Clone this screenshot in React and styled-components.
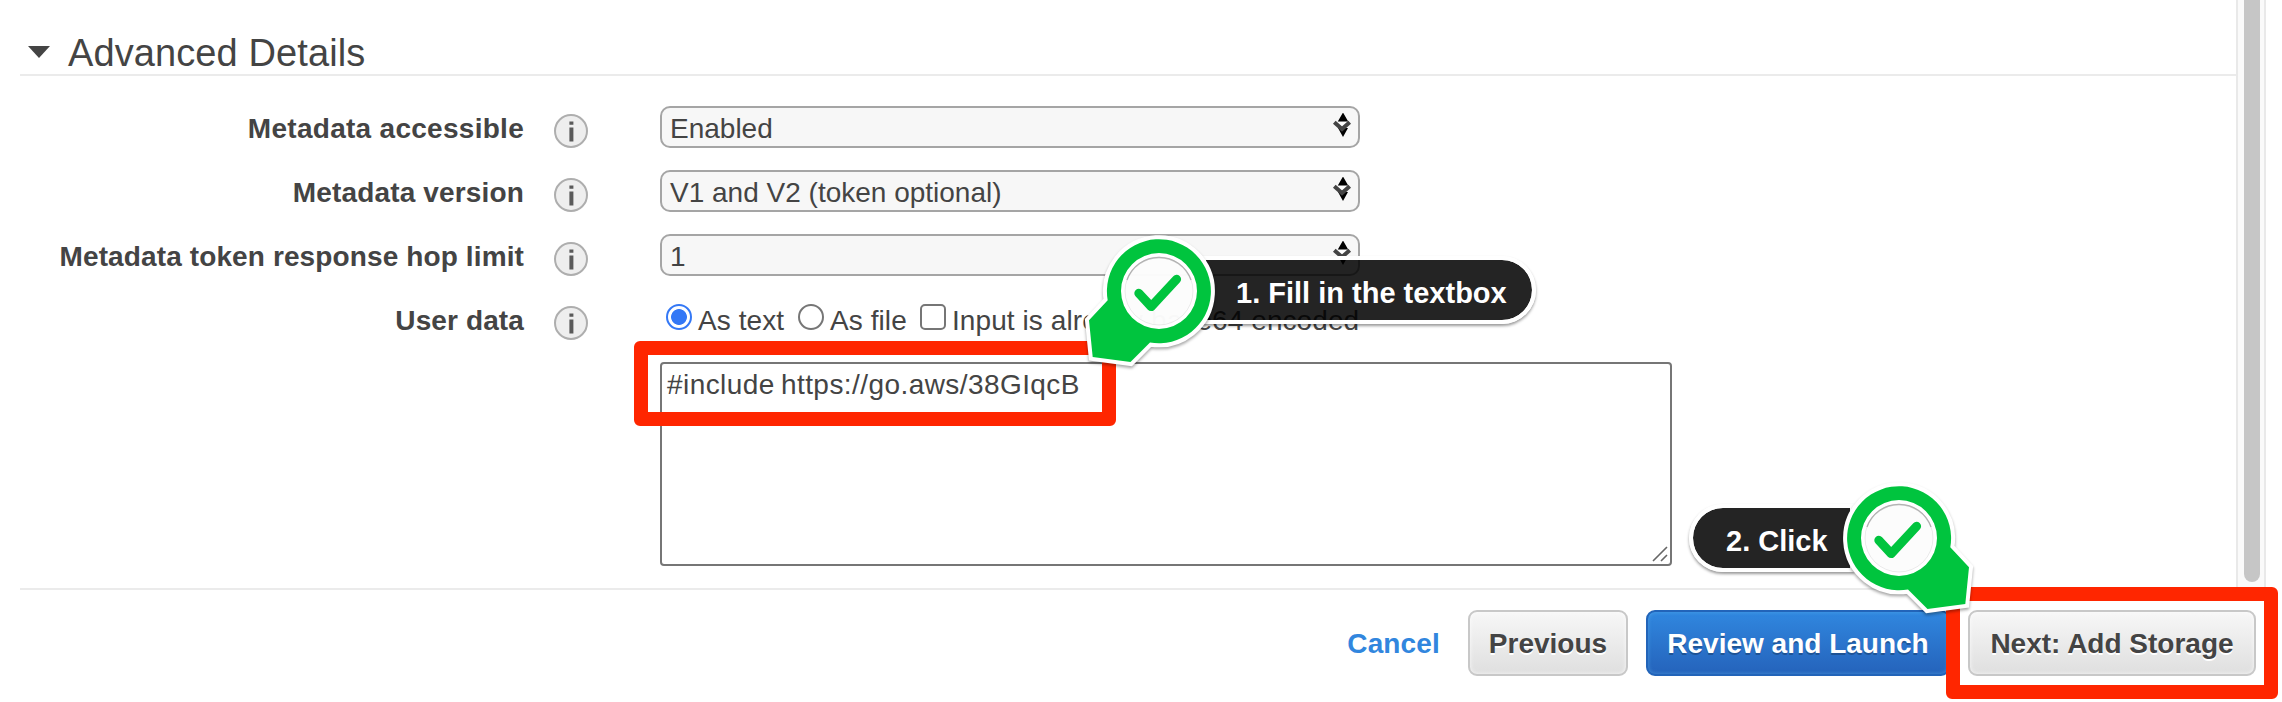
import React from 'react';
import styled, { createGlobalStyle } from 'styled-components';

const Global = createGlobalStyle`
  * { box-sizing: border-box; }
  body { margin: 0; background: #fff; }
`;

const Page = styled.div`
  position: relative;
  width: 2282px;
  height: 702px;
  overflow: hidden;
  background: #fff;
  color: #444;
  font: 28px/32px "Liberation Sans", Arial, sans-serif;
  display: flex;
  flex-direction: column;
`;

const Body = styled.div`
  display: flex;
  height: 588px;
`;

const Content = styled.main`
  width: 2236px;
  padding-left: 20px;
`;

const Heading = styled.h2`
  margin: 0;
  height: 76px;
  padding: 32px 0 0 8px;
  border-bottom: 2px solid #ebebeb;
  font-size: 38px;
  line-height: 42px;
  font-weight: 400;
  letter-spacing: 0.1px;
  display: flex;
  gap: 18px;
`;

const Caret = styled.svg`
  width: 22px;
  height: 12px;
  margin-top: 14px;
`;

const Form = styled.div`
  padding-top: 30px;
  display: flex;
  flex-direction: column;
  gap: 22px;
`;

const Row = styled.div`
  display: flex;
  height: 42px;
`;

const Label = styled.div`
  width: 504px;
  padding-top: 7px;
  text-align: right;
  font-weight: 700;
  letter-spacing: ${(p) => p.$ls || 0.12}px;
  white-space: nowrap;
`;

const Info = styled.svg`
  width: 36px;
  height: 36px;
  margin: 7px 71px 0 29px;
`;

const SelectBox = styled.div`
  width: 700px;
  height: 42px;
  border: 2px solid #a5a5a5;
  border-radius: 10px;
  background: #f7f7f7;
  padding: 5px 6px 0 8px;
  display: flex;
  justify-content: space-between;
`;

const Arrows = styled.svg`
  width: 20px;
  height: 26px;
`;

const Options = styled.div`
  display: flex;
  padding: 6px 0 0 6px;
  white-space: nowrap;
  letter-spacing: 0.08px;
`;

const OptionText = styled.span`
  width: ${(p) => p.$w}px;
  margin-left: 6px;
  padding-top: 1px;
`;

const Radio = styled.span`
  width: 26px;
  height: 26px;
  border: 2px solid ${(p) => (p.$on ? '#3478f6' : '#767676')};
  border-radius: 50%;
  background: ${(p) => (p.$on ? 'radial-gradient(circle, #3478f6 7.5px, #fff 8.3px)' : '#fff')};
`;

const Check = styled.span`
  width: 26px;
  height: 26px;
  border: 2px solid #767676;
  border-radius: 5px;
`;

const TextArea = styled.div`
  width: 1012px;
  height: 204px;
  margin-left: 640px;
  border: 2px solid #767676;
  border-radius: 4px;
  padding: 5px;
  letter-spacing: 0.43px;
  word-spacing: -2px;
  display: flex;
  justify-content: space-between;
`;

const Grip = styled.svg`
  width: 16px;
  height: 18px;
  align-self: flex-end;
  margin: 0 -3px -4px 0;
`;

const ScrollTrack = styled.div`
  width: 30px;
  height: 588px;
  border: solid #e9e9e9;
  border-width: 0 2px;
  background: #fafafa;
  padding-left: 6px;
`;

const ScrollThumb = styled.div`
  width: 16px;
  height: 582px;
  border-radius: 0 0 8px 8px;
  background: #c6c6c6;
`;

const Footer = styled.footer`
  margin-left: 20px;
  width: 2236px;
  border-top: 2px solid #ebebeb;
  padding-top: 20px;
  display: flex;
  justify-content: flex-end;
  gap: 18px;
`;

const Cancel = styled.a`
  color: #3186de;
  font-weight: 700;
  line-height: 68px;
  margin-right: 10px;
  letter-spacing: 0.15px;
`;

const Button = styled.button`
  width: ${(p) => p.$w}px;
  height: 66px;
  padding: 2px 0 0;
  border: 2px solid ${(p) => (p.$primary ? '#2264b9' : '#c8c8c8')};
  border-radius: 9px;
  background: ${(p) => (p.$primary ? 'linear-gradient(#3087df, #2563bb)' : 'linear-gradient(#f7f7f7, #dfdfdf)')};
  box-shadow: inset 0 0 4px ${(p) => (p.$primary ? 'rgba(90,175,235,.6)' : 'rgba(255,255,255,.8)')};
  color: ${(p) => (p.$primary ? '#fff' : '#444')};
  text-shadow: 0 2px 0 ${(p) => (p.$primary ? 'rgba(0,0,0,.25)' : '#fff')};
  font: 700 28px/32px "Liberation Sans", Arial, sans-serif;
  white-space: nowrap;
`;

const RedBox = styled.div`
  position: absolute;
  left: ${(p) => p.$x}px;
  top: ${(p) => p.$y}px;
  width: ${(p) => p.$w}px;
  height: ${(p) => p.$h}px;
  border: 14px solid #ff2600;
  border-radius: 6px;
`;

const Callout = styled.div`
  position: absolute;
  left: ${(p) => p.$x}px;
  top: ${(p) => p.$y}px;
  width: ${(p) => p.$w}px;
  height: 68px;
  border: 4px solid #fff;
  border-radius: ${(p) => (p.$flip ? '34px 0 0 34px' : '0 34px 34px 0')};
  background: rgba(0, 0, 0, 0.86);
  background-clip: padding-box;
  box-shadow: 0 2px 3px rgba(0, 0, 0, 0.4);
  color: #fff;
  font: 700 29px/34px "Liberation Sans", Arial, sans-serif;
  white-space: nowrap;
  padding: 16px 0 0 ${(p) => p.$pad}px;
`;

const PinSvg = styled.svg`
  position: absolute;
  left: ${(p) => p.$x - 90}px;
  top: ${(p) => p.$y - 90}px;
  width: 180px;
  height: 180px;
  filter: drop-shadow(0 2px 1.5px rgba(0, 0, 0, 0.35));
`;

const RING = 'M-51.3 9.3 L-70 29.3 L-66.3 66 L-28.5 71 L-9 51.5 A52 52 0 1 0 -51.3 9.3 Z M38 0 A38 38 0 1 1 -38 0 A38 38 0 1 1 38 0 Z';

function Pin({ x, y, flip }) {
  return (
    <PinSvg $x={x} $y={y} viewBox="-90 -90 180 180">
      <circle r="35" fill="#fff" fillOpacity=".97" />
      <g transform={flip ? 'scale(-1 1)' : undefined}>
        <path d={RING} fill="#fff" fillRule="evenodd" stroke="#fff" strokeWidth="8" />
        <path d={RING} fill="#00c43e" fillRule="evenodd" />
      </g>
      <path d="M-32 -11 A34 34 0 0 1 32 -11" fill="none" stroke="#000" strokeOpacity=".25" strokeWidth="1.4" />
      <circle r="34" fill="none" stroke="#000" strokeOpacity=".08" />
      <path d="M-20.2 2.2 L-7.8 15.6 L17.6 -11.8" fill="none" stroke="#00c43e" strokeWidth="9" strokeLinecap="round" strokeLinejoin="round" />
    </PinSvg>
  );
}

const InfoIcon = () => (
  <Info viewBox="0 0 36 36">
    <circle cx="18" cy="18" r="16" fill="#eee" stroke="#aeaeae" strokeWidth="2" />
    <path d="M18.4 14.5V28.5M18.4 8.5v3.2" stroke="#5a5a5a" strokeWidth="4" />
  </Info>
);

function Select({ children }) {
  return (
    <SelectBox>
      <span>{children}</span>
      <Arrows viewBox="0 1 20 26">
        <path d="M11 0.5 L16.2 9.6 H5.8 Z M6 16 H16 L11 25 Z" fill="#000" />
        <path d="M5 10.2 H16 L10 16 Z" fill="#fff" />
        <path d="M2.3 10.2 L10 17 L17.7 10.2" fill="none" stroke="#444" strokeWidth="4" />
      </Arrows>
    </SelectBox>
  );
}

const FIELDS = [
  { label: 'Metadata accessible', spacing: 0.28, value: 'Enabled' },
  { label: 'Metadata version', spacing: 0.15, value: 'V1 and V2 (token optional)' },
  { label: 'Metadata token response hop limit', spacing: 0.12, value: '1' },
];

export default function App() {
  return (
    <Page>
      <Global />
      <Body>
        <Content>
          <Heading>
            <Caret viewBox="0 0 22 12"><path d="M0 0H22L11 12Z" fill="#444" /></Caret>
            Advanced Details
          </Heading>
          <Form>
            {FIELDS.map(({ label, spacing, value }) => (
              <Row key={label}>
                <Label $ls={spacing}>{label}</Label>
                <InfoIcon />
                <Select>{value}</Select>
              </Row>
            ))}
            <Row>
              <Label>User data</Label>
              <InfoIcon />
              <Options>
                <Radio $on />
                <OptionText $w={100}>As text</OptionText>
                <Radio />
                <OptionText $w={90}>As file</OptionText>
                <Check />
                <OptionText $w={420}>Input is already base64 encoded</OptionText>
              </Options>
            </Row>
            <TextArea>
              <span>#include https://go.aws/38GIqcB</span>
              <Grip viewBox="0 0 16 18">
                <path d="M1 16 L15 2 M9 16 L15 10" stroke="#666" strokeWidth="1.6" />
              </Grip>
            </TextArea>
          </Form>
        </Content>
        <ScrollTrack><ScrollThumb /></ScrollTrack>
      </Body>
      <Footer>
        <Cancel>Cancel</Cancel>
        <Button $w={160}>Previous</Button>
        <Button $w={304} $primary>Review and Launch</Button>
        <Button $w={288}>Next: Add Storage</Button>
      </Footer>
      <RedBox $x={633.5} $y={341} $w={482} $h={85} />
      <RedBox $x={1946} $y={587} $w={332} $h={112} />
      <Callout $x={1202} $y={256} $w={334} $pad={30}>1. Fill in the textbox</Callout>
      <Callout $x={1689} $y={504} $w={165} $pad={33} $flip>2. Click</Callout>
      <Pin x={1158.5} y={290.7} />
      <Pin x={1898.7} y={538.3} flip />
    </Page>
  );
}
